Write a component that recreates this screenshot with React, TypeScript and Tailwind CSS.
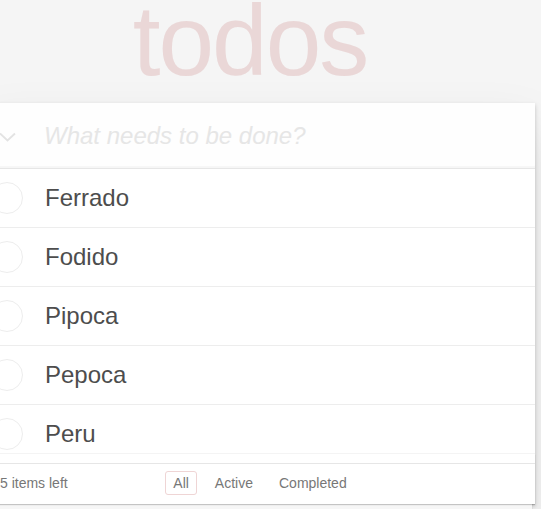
import React from "react";

const todos = ["Ferrado", "Fodido", "Pipoca", "Pepoca", "Peru"];

function Circle() {
  return (
    <svg
      className="absolute left-[6px] top-[12px]"
      width="34"
      height="34"
      viewBox="0 0 34 34"
    >
      <circle cx="16" cy="17" r="15.5" fill="none" stroke="#ededed" strokeWidth="1" />
    </svg>
  );
}

export default function App() {
  return (
    <div className="relative h-[509px] w-full overflow-hidden bg-[#f5f5f5] font-['Liberation_Sans','Helvetica_Neue',Arial,sans-serif]">
      <h1 className="h-[80px] w-[500px] text-center text-[100px] leading-[80px] font-normal tracking-[-2px] text-[#ead7d7]">
        todos
      </h1>
      <section className="relative mt-[23px] -ml-[15px] w-[550px] bg-white shadow-[0_2px_4px_0_rgba(0,0,0,0.2),0_25px_50px_0_rgba(0,0,0,0.1)]">
        <header className="relative h-[65px] bg-[#fefefe] shadow-[inset_0_-2px_1px_rgba(0,0,0,0.03)]">
          <svg
            className="absolute left-[14px] top-[29px]"
            width="18"
            height="10"
            viewBox="0 0 18 10"
          >
            <polyline points="1,1.5 8.5,8.5 16,1.5" fill="none" stroke="#e3e3e3" strokeWidth="1.8" />
          </svg>
          <div className="pl-[59px] pt-[16px] text-[24px] leading-[33.6px] italic text-[#e6e6e6]">
            What needs to be done?
          </div>
        </header>
        <ul className="border-t border-[#e6e6e6]">
          {todos.map((t, i) => {
            const last = i === todos.length - 1;
            return (
              <li
                key={t}
                className={last ? "relative h-[58px]" : "relative h-[59px] border-b border-[#ededed]"}
              >
                <Circle />
                <div className="py-[15px] pl-[60px] text-[24px] leading-[28px] text-[#4d4d4d]">{t}</div>
                {last && <div className="absolute left-0 right-0 top-[48px] h-px bg-[#f4f4f4]" />}
              </li>
            );
          })}
        </ul>
        <footer className="relative h-[41px] border-t border-[#e6e6e6] text-[14px] text-[#777]">
          <div className="pointer-events-none absolute bottom-0 left-0 right-0 h-[50px] shadow-[0_1px_1px_rgba(0,0,0,0.2),0_8px_0_-3px_#f6f6f6,0_9px_1px_-3px_rgba(0,0,0,0.2),0_16px_0_-6px_#f6f6f6,0_17px_2px_-6px_rgba(0,0,0,0.2)]" />
          <div className="relative flex h-[40px] items-center bg-white px-[15px] pb-[3px]">
            <span className="leading-[20px]">5 items left</span>
          </div>
          <ul className="absolute left-0 right-0 top-[7px] flex justify-center gap-[10px]">
            <li className="rounded-[3px] border border-[#efd5d5] px-[7px] py-[3px] leading-[16px]">All</li>
            <li className="rounded-[3px] border border-transparent px-[7px] py-[3px] leading-[16px]">Active</li>
            <li className="rounded-[3px] border border-transparent px-[7px] py-[3px] leading-[16px]">Completed</li>
          </ul>
        </footer>
      </section>
    </div>
  );
}
